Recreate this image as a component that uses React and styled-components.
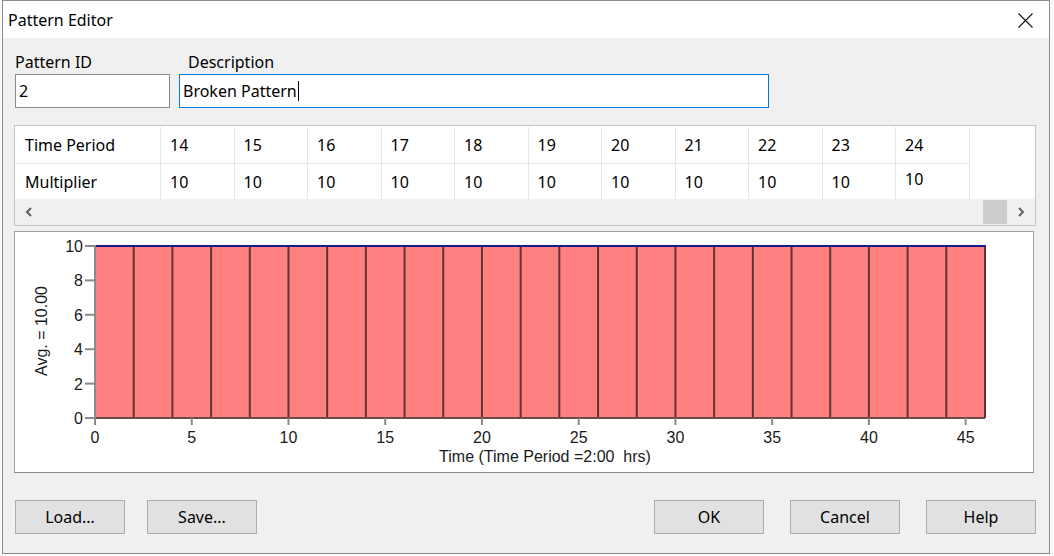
import styled, { createGlobalStyle } from 'styled-components';

const periods = [14, 15, 16, 17, 18, 19, 20, 21, 22, 23, 24];

// chart geometry (svg coords, panel inner origin)
const PX0 = 80;
const PX1 = 970;
const PYT = 14;
const PYB = 186;
const xs = v => PX0 + (v * (PX1 - PX0)) / 46;
const ys = v => PYB - (v * (PYB - PYT)) / 10;

function Chart() {
  const seps = [];
  for (let v = 2; v <= 46; v += 2) seps.push(v);
  const yTicks = [0, 2, 4, 6, 8, 10];
  const xTicks = [0, 5, 10, 15, 20, 25, 30, 35, 40, 45];

  return (
    <svg width="1018" height="240" viewBox="0 0 1018 240">
      <rect x={PX0} y={PYT} width={PX1 - PX0} height={PYB - PYT} fill="#ff8080" />
      {seps.map(v => (
        <line key={v} x1={xs(v)} x2={xs(v)} y1={PYT} y2={PYB} stroke="#5e3434" strokeWidth="2" />
      ))}
      <line x1={PX0} x2={PX1} y1={PYB} y2={PYB} stroke="#6a4a4a" strokeWidth="2" />
      <line x1={PX0} x2={PX1 + 1} y1={PYT} y2={PYT} stroke="#1a1a8c" strokeWidth="2" />
      <line x1={PX0} x2={PX0} y1={PYT - 1} y2={PYB + 1} stroke="#8a8a8a" strokeWidth="2" />

      {yTicks.map(v => (
        <g key={v}>
          <line x1={PX0 - 10} x2={PX0} y1={ys(v)} y2={ys(v)} stroke="#8a8a8a" strokeWidth="2" />
          <text x={PX0 - 12} y={ys(v) + 6} textAnchor="end" fontSize="16" fill="#1a1a1a">
            {v}
          </text>
        </g>
      ))}
      {xTicks.map(v => (
        <g key={v}>
          <line x1={xs(v)} x2={xs(v)} y1={PYB} y2={PYB + 7} stroke="#8a8a8a" strokeWidth="2" />
          <text x={xs(v)} y={PYB + 25} textAnchor="middle" fontSize="16" fill="#1a1a1a">
            {v}
          </text>
        </g>
      ))}
      <text x={530} y={230} textAnchor="middle" fontSize="16" fill="#1a1a1a">
        {'Time (Time Period =2:00\u00a0 hrs)'}
      </text>
      <text transform="translate(32,99) rotate(-90)" textAnchor="middle" fontSize="16" fill="#1a1a1a">
        Avg. = 10.00
      </text>
    </svg>
  );
}

function Chevron({ dir }) {
  const pts = dir === 'left' ? '6,1 2,5 6,9' : '2,1 6,5 2,9';
  return (
    <svg width="8" height="10" viewBox="0 0 8 10">
      <polyline points={pts} fill="none" stroke="#606060" strokeWidth="2" />
    </svg>
  );
}

export default function App() {
  return (
    <>
      <GlobalStyle />
      <Window>
        <TitleBar>
          <Title>Pattern Editor</Title>
          <CloseButton>
            <svg width="15" height="15" viewBox="0 0 15 15">
              <path d="M0.5 0.5 L14.5 14.5 M14.5 0.5 L0.5 14.5" stroke="#111" strokeWidth="1.1" />
            </svg>
          </CloseButton>
        </TitleBar>
        <Body>
          <FieldRow>
            <Field>
              <Label>Pattern ID</Label>
              <Input $width={155}>2</Input>
            </Field>
            <Field>
              <Label $indent>Description</Label>
              <Input $width={590} $focused>
                Broken Pattern<Caret />
              </Input>
            </Field>
          </FieldRow>

          <GridPanel>
            <Grid>
              <HeadCell>Time Period</HeadCell>
              {periods.map(p => (
                <Cell key={p}>{p}</Cell>
              ))}
              <Filler />
              <HeadCell $last>Multiplier</HeadCell>
              {periods.map((p, i) => (
                <Cell key={p} $last $editing={i === periods.length - 1}>
                  10
                </Cell>
              ))}
              <Filler $last />
            </Grid>
            <ScrollBar>
              <ScrollArrow>
                <Chevron dir="left" />
              </ScrollArrow>
              <ScrollTrack>
                <Thumb />
              </ScrollTrack>
              <ScrollArrow>
                <Chevron dir="right" />
              </ScrollArrow>
            </ScrollBar>
          </GridPanel>

          <ChartPanel>
            <Chart />
          </ChartPanel>

          <ButtonRow>
            <ButtonGroup>
              <Button>Load...</Button>
              <Button>Save...</Button>
            </ButtonGroup>
            <ButtonGroup $wide>
              <Button>OK</Button>
              <Button>Cancel</Button>
              <Button>Help</Button>
            </ButtonGroup>
          </ButtonRow>
        </Body>
      </Window>
    </>
  );
}

const GlobalStyle = createGlobalStyle`
  body {
    margin: 0;
    background: #fafafa;
    font-family: "Noto Sans", "Open Sans", sans-serif;
  }
  svg text {
    font-family: "Liberation Sans", Arial, sans-serif;
  }
`;

const Window = styled.div`
  box-sizing: border-box;
  width: 1048px;
  height: 554px;
  margin-left: 2px;
  border: 1px solid #8c8c8c;
  background: #f0f0f0;
  display: flex;
  flex-direction: column;
`;

const TitleBar = styled.div`
  height: 37px;
  background: #fff;
  display: flex;
  align-items: center;
  justify-content: space-between;
  padding: 0 16px 0 5px;
`;

const Title = styled.div`
  font-size: 16px;
  color: #000;
  margin-top: 1px;
`;

const CloseButton = styled.div`
  display: flex;
  margin-top: 1px;
`;

const Body = styled.div`
  flex: 1;
  display: flex;
  flex-direction: column;
  padding: 0 13px 0 11px;
`;

const FieldRow = styled.div`
  display: flex;
  gap: 9px;
  margin: 13px 0 0 1px;
`;

const Field = styled.div`
  display: flex;
  flex-direction: column;
  gap: 1px;
`;

const Label = styled.div`
  font-size: 16px;
  line-height: 22px;
  color: #000;
  padding-left: ${p => (p.$indent ? '9px' : '0')};
`;

const Input = styled.div`
  box-sizing: border-box;
  width: ${p => p.$width}px;
  height: 34px;
  background: #fff;
  border: 1px solid ${p => (p.$focused ? '#0078d7' : '#8c8c8c')};
  font-size: 16px;
  line-height: 31px;
  padding-left: 3px;
  color: #000;
  display: flex;
  align-items: center;
`;

const Caret = styled.span`
  display: inline-block;
  width: 1px;
  height: 20px;
  background: #000;
  margin-left: 1px;
`;

const GridPanel = styled.div`
  box-sizing: border-box;
  width: 1022px;
  height: 101px;
  margin-top: 17px;
  border: 1px solid #c4c4c4;
  background: #fff;
  display: flex;
  flex-direction: column;
`;

const Grid = styled.div`
  display: grid;
  grid-template-columns: 146px repeat(11, 73.5px) 1fr;
  grid-template-rows: 37px 35px;
  padding-top: 1px;
`;

const BaseCell = styled.div`
  font-size: 16px;
  color: #000;
  display: flex;
  align-items: center;
  border-right: 1px solid #e6e6e6;
  border-bottom: ${p => (p.$last ? 'none' : '1px solid #e6e6e6')};
`;

const HeadCell = styled(BaseCell)`
  padding-left: 10px;
`;

const Cell = styled(BaseCell)`
  padding-left: 9px;
  padding-bottom: ${p => (p.$editing ? '6px' : '0')};
`;

const Filler = styled.div``;

const ScrollBar = styled.div`
  flex: 1;
  display: flex;
  align-items: stretch;
  background: #f0f0f0;
`;

const ScrollArrow = styled.div`
  width: 28px;
  display: flex;
  align-items: center;
  justify-content: center;
`;

const ScrollTrack = styled.div`
  flex: 1;
  display: flex;
  justify-content: flex-end;
  padding: 1px 0;
`;

const Thumb = styled.div`
  width: 24px;
  background: #cdcdcd;
`;

const ChartPanel = styled.div`
  box-sizing: border-box;
  width: 1020px;
  height: 242px;
  margin-top: 5px;
  border: 1px solid #a0a0a0;
  border-bottom-color: #8a8a8a;
  background: #fff;
  display: flex;
`;

const ButtonRow = styled.div`
  display: flex;
  justify-content: space-between;
  margin: 27px 0 0 1px;
`;

const ButtonGroup = styled.div`
  display: flex;
  gap: ${p => (p.$wide ? '26px' : '22px')};
`;

const Button = styled.div`
  box-sizing: border-box;
  width: 110px;
  height: 34px;
  background: #e1e1e1;
  border: 1px solid #adadad;
  font-size: 16px;
  color: #000;
  display: flex;
  align-items: center;
  justify-content: center;
`;
